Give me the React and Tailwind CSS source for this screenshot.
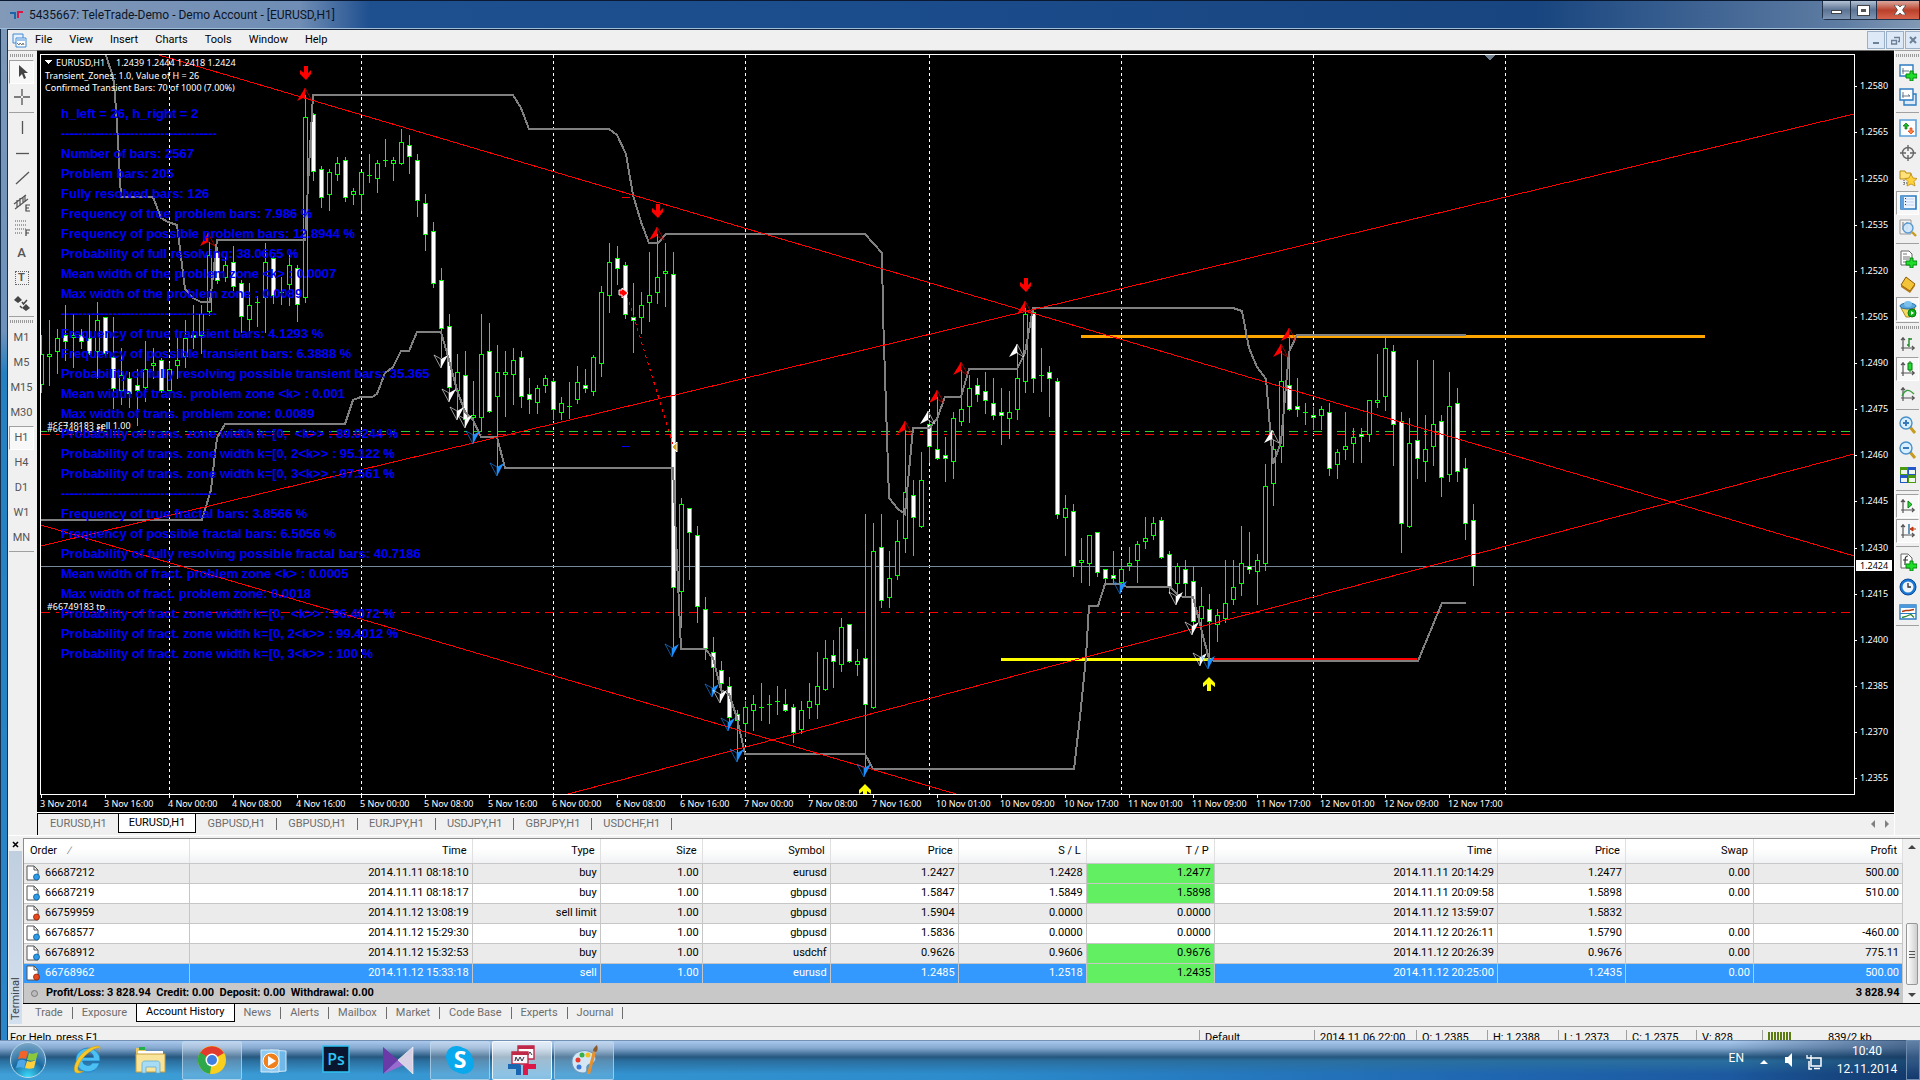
import { useState } from "react";

// one row per hour bar: [high, body top, body bottom, low, type]
// u = rising (hollow), d = falling (filled), x = doji
const BARS = [
  [335, 354, 385, 392, "u"], [320, 354, 357, 385, "u"], [329, 338, 352, 373, "u"], [305, 335, 342, 360, "d"],
  [314, 335, 338, 367, "u"], [329, 335, 342, 348, "d"], [314, 338, 354, 354, "d"], [302, 320, 352, 378, "u"],
  [317, 317, 354, 355, "d"], [317, 357, 389, 408, "d"], [348, 375, 391, 404, "u"], [372, 378, 394, 407, "d"],
  [369, 385, 391, 425, "d"], [341, 369, 388, 401, "u"], [348, 363, 366, 378, "u"], [358, 360, 391, 392, "d"],
  [363, 369, 391, 397, "u"], [338, 360, 366, 378, "u"], [320, 338, 357, 367, "u"], [305, 335, 338, 348, "d"],
  [305, 314, 336, 353, "u"], [242, 255, 312, 315, "u"], [247, 252, 281, 283, "d"], [257, 265, 278, 281, "u"],
  [246, 262, 287, 290, "d"], [280, 283, 317, 332, "d"], [283, 305, 320, 332, "u"], [296, 302, 302, 327, "x"],
  [243, 262, 298, 332, "u"], [256, 258, 296, 303, "d"], [277, 292, 292, 305, "x"], [255, 265, 285, 305, "u"],
  [265, 268, 305, 321, "d"], [95, 117, 298, 302, "u"], [113, 114, 172, 180, "d"], [166, 169, 198, 207, "d"],
  [169, 172, 195, 210, "u"], [157, 163, 175, 180, "u"], [157, 160, 198, 201, "d"], [188, 191, 195, 204, "u"],
  [172, 172, 195, 210, "u"], [154, 175, 175, 183, "x"], [160, 163, 179, 192, "u"], [139, 160, 160, 167, "x"],
  [157, 160, 164, 180, "u"], [129, 142, 164, 164, "u"], [135, 145, 157, 173, "d"], [154, 160, 201, 216, "d"],
  [194, 203, 235, 250, "d"], [222, 231, 284, 287, "d"], [268, 280, 329, 357, "d"], [314, 326, 388, 393, "d"],
  [354, 372, 391, 410, "u"], [351, 375, 420, 423, "d"], [381, 415, 418, 437, "u"], [314, 354, 418, 431, "u"],
  [323, 351, 412, 412, "d"], [345, 372, 397, 467, "u"], [351, 372, 375, 416, "u"], [348, 360, 375, 404, "u"],
  [351, 357, 397, 407, "d"], [378, 394, 400, 413, "d"], [385, 388, 403, 413, "u"], [375, 378, 386, 392, "u"],
  [378, 381, 410, 419, "d"], [397, 403, 413, 419, "u"], [382, 406, 406, 419, "x"], [366, 382, 400, 403, "u"],
  [369, 385, 389, 392, "d"], [355, 357, 392, 395, "u"], [286, 292, 364, 376, "u"], [243, 262, 296, 312, "u"],
  [246, 258, 269, 284, "d"], [262, 265, 315, 318, "d"], [283, 317, 321, 352, "d"], [292, 305, 318, 333, "u"],
  [252, 295, 303, 321, "u"], [234, 277, 293, 303, "u"], [243, 271, 274, 306, "u"], [252, 274, 588, 647, "d"],
  [498, 504, 592, 627, "u"], [508, 508, 533, 579, "d"], [526, 535, 607, 622, "d"], [597, 609, 649, 659, "d"],
  [637, 652, 668, 690, "d"], [661, 670, 684, 692, "d"], [677, 686, 718, 722, "d"], [710, 714, 721, 752, "d"],
  [701, 707, 724, 736, "u"], [695, 704, 711, 730, "u"], [683, 707, 707, 721, "x"], [695, 704, 704, 724, "x"],
  [686, 701, 701, 715, "x"], [689, 704, 711, 711, "d"], [704, 707, 733, 742, "d"], [701, 710, 730, 733, "u"],
  [683, 701, 708, 718, "u"], [652, 686, 705, 718, "u"], [640, 658, 690, 690, "u"], [640, 655, 662, 687, "d"],
  [618, 627, 665, 671, "u"], [624, 624, 662, 662, "d"], [649, 661, 665, 675, "u"], [514, 658, 705, 767, "d"],
  [523, 551, 708, 708, "u"], [514, 547, 601, 607, "d"], [551, 578, 598, 607, "u"], [520, 541, 576, 579, "u"],
  [430, 492, 539, 552, "u"], [480, 495, 518, 555, "d"], [452, 480, 527, 527, "u"], [420, 424, 447, 462, "d"],
  [397, 449, 459, 459, "d"], [437, 455, 459, 481, "d"], [412, 418, 462, 478, "u"], [370, 409, 422, 425, "u"],
  [375, 388, 407, 422, "u"], [378, 385, 395, 401, "d"], [372, 391, 401, 413, "d"], [378, 403, 416, 419, "d"],
  [388, 412, 416, 444, "d"], [391, 412, 419, 438, "u"], [352, 378, 410, 419, "u"], [308, 314, 382, 392, "u"],
  [311, 312, 379, 392, "d"], [348, 375, 375, 392, "x"], [366, 372, 379, 416, "d"], [378, 381, 515, 518, "d"],
  [495, 508, 518, 555, "u"], [504, 511, 567, 576, "d"], [538, 560, 563, 582, "u"], [535, 535, 564, 585, "u"],
  [532, 532, 573, 576, "d"], [569, 569, 579, 583, "d"], [551, 575, 579, 583, "d"], [560, 569, 583, 583, "u"],
  [547, 563, 566, 570, "u"], [541, 544, 561, 582, "u"], [517, 538, 542, 548, "u"], [517, 523, 536, 539, "u"],
  [517, 520, 558, 558, "d"], [551, 554, 587, 593, "d"], [563, 566, 584, 594, "u"], [560, 569, 584, 595, "d"],
  [566, 581, 622, 625, "d"], [587, 606, 619, 657, "u"], [594, 609, 622, 660, "d"], [609, 615, 625, 641, "u"],
  [560, 603, 619, 622, "u"], [560, 587, 600, 604, "u"], [526, 563, 584, 595, "u"], [532, 566, 570, 573, "d"],
  [554, 560, 572, 604, "u"], [464, 486, 564, 570, "u"], [440, 449, 484, 505, "u"], [351, 381, 447, 462, "u"],
  [335, 385, 410, 410, "d"], [378, 406, 410, 416, "d"], [403, 412, 412, 425, "x"], [407, 415, 418, 429, "d"],
  [406, 409, 416, 429, "u"], [403, 412, 469, 475, "d"], [449, 452, 465, 478, "u"], [412, 446, 450, 459, "u"],
  [428, 437, 444, 462, "u"], [428, 434, 437, 462, "d"], [400, 400, 435, 441, "u"], [354, 400, 403, 407, "u"],
  [337, 348, 397, 410, "u"], [345, 351, 425, 465, "d"], [412, 421, 524, 552, "d"], [418, 443, 527, 527, "u"],
  [360, 440, 459, 478, "d"], [415, 449, 462, 481, "u"], [360, 424, 447, 465, "u"], [415, 421, 478, 496, "d"],
  [372, 406, 475, 481, "u"], [388, 403, 472, 481, "d"], [458, 468, 524, 539, "d"], [504, 520, 567, 585, "d"],
];

const UPPER =
  "106,55 109,65 112,73 114,83 116,110 118,140 121,197 153,197 161,218 168,222 177,225 185,289 193,298 201,302 210,302 217,240 305,240 313,95 513,95 521,108 529,129 609,129 617,135 626,154 633,195 641,222 649,243 658,243 666,234 865,234 882,253 883,314 889,498 898,509 905,514 913,428 929,428 937,419 945,397 961,397 969,369 1017,369 1025,353 1033,308 1233,308 1242,311 1249,348 1257,367 1266,379 1273,464 1281,442 1289,352 1297,335 1466,335";
const LOWER =
  "41,520 202,520 208,500 211,490 215,453 217,438 225,424 345,424 353,400 361,397 372,397 377,394 385,373 393,367 401,351 409,351 417,332 441,332 449,360 457,390 465,412 473,420 481,437 497,437 505,468 673,468 675,515 681,649 705,649 713,658 721,690 729,694 737,718 745,754 865,754 873,769 1074,769 1080,717 1086,657 1089,606 1098,606 1105,584 1121,584 1127,587 1170,587 1177,594 1183,597 1193,597 1201,628 1209,659 1214,661 1418,661 1442,603 1466,603";

const DAY_LINES = [169, 361, 553, 745, 929, 1121, 1313, 1505];

const UP_MARKS = [
  [305, 88, "red"], [208, 233, "red"], [657, 227, "red"], [905, 421, "red"], [937, 390, "red"], [961, 362, "red"],
  [1025, 301, "red"], [1281, 344, "red"], [1289, 328, "red"], [928, 411, "white"], [1017, 344, "white"], [1272, 430, "white"],
];
const DOWN_MARKS = [
  [441, 368, "white"], [449, 402, "white"], [457, 420, "white"], [465, 428, "white"], [473, 444, "#1e90ff"],
  [497, 476, "#1e90ff"], [672, 657, "#1e90ff"], [712, 697, "#1e90ff"], [720, 703, "white"], [728, 731, "#1e90ff"],
  [737, 762, "#1e90ff"], [864, 777, "#1e90ff"], [1120, 594, "#1e90ff"], [1176, 605, "white"], [1192, 635, "white"],
  [1200, 666, "white"], [1208, 669, "#1e90ff"],
];

const TIMES = [
  "3 Nov 2014", "3 Nov 16:00", "4 Nov 00:00", "4 Nov 08:00", "4 Nov 16:00", "5 Nov 00:00", "5 Nov 08:00", "5 Nov 16:00",
  "6 Nov 00:00", "6 Nov 08:00", "6 Nov 16:00", "7 Nov 00:00", "7 Nov 08:00", "7 Nov 16:00", "10 Nov 01:00", "10 Nov 09:00",
  "10 Nov 17:00", "11 Nov 01:00", "11 Nov 09:00", "11 Nov 17:00", "12 Nov 01:00", "12 Nov 09:00", "12 Nov 17:00",
];
const PRICES = [
  [86, "1.2580"], [132, "1.2565"], [179, "1.2550"], [225, "1.2535"], [271, "1.2520"], [317, "1.2505"], [363, "1.2490"], [409, "1.2475"],
  [455, "1.2460"], [501, "1.2445"], [548, "1.2430"], [594, "1.2415"], [640, "1.2400"], [686, "1.2385"], [732, "1.2370"], [778, "1.2355"],
];

const DASHES = "------------------------------------";
const STATS = [
  "h_left = 26, h_right = 2",
  DASHES,
  "Number of bars: 2567",
  "Problem bars: 205",
  "Fully resolved bars: 126",
  "Frequency of true problem bars: 7.986 %",
  "Frequency of possible problem bars: 12.8944 %",
  "Probability of full resolving: 38.0665 %",
  "Mean width of the problem zone <k> : 0.0007",
  "Max width of the problem zone : 0.0089",
  DASHES,
  "Frequency of true transient bars: 4.1293 %",
  "Frequency of possible transient bars: 6.3888 %",
  "Probability of fully resolving possible transient bars: 35.365",
  "Mean width of trans. problem zone <k> : 0.001",
  "Max width of trans. problem zone: 0.0089",
  "Probability of trans. zone width k=[0,  <k>> : 89.0244 %",
  "Probability of trans. zone width k=[0, 2<k>> : 95.122 %",
  "Probability of trans. zone width k=[0, 3<k>> : 97.561 %",
  DASHES,
  "Frequency of true fractal bars: 3.8566 %",
  "Frequency of possible fractal bars: 6.5056 %",
  "Probability of fully resolving possible fractal bars: 40.7186",
  "Mean width of fract. problem zone <k> : 0.0005",
  "Max width of fract. problem zone: 0.0018",
  "Probability of fract. zone width k=[0,  <k>> : 96.4072 %",
  "Probability of fract. zone width k=[0, 2<k>> : 99.4012 %",
  "Probability of fract. zone width k=[0, 3<k>> : 100 %",
];

function Candle({ x, bar }) {
  const [high, top, bottom, low, type] = bar;
  if (type === "x") {
    return <path d={`M${x} ${high}h1V${low}h-1zM${x - 2} ${top}h5v1h-5z`} fill="#0f0" />;
  }
  return (
    <g>
      <rect x={x} y={high} width="1" height={low - high + 1} fill="#0f0" />
      <rect x={x - 2} y={top} width="5" height={Math.max(bottom - top, 3)} fill="#0f0" />
      <rect x={x - 1} y={top + 1} width="3" height={Math.max(bottom - top - 2, 1)} fill={type === "d" ? "#fff" : "#000"} />
    </g>
  );
}

function Chart() {
  return (
    <svg
      viewBox="37 51 1857 761"
      preserveAspectRatio="xMinYMin meet"
      className="block w-full h-full bg-black font-['Noto_Sans',sans-serif] text-[9px]"
      role="img"
      aria-label="EURUSD,H1"
    >
      <defs>
        <clipPath id="plot">
          <rect x="41" y="55" width="1813" height="739" />
        </clipPath>
      </defs>
      <g clipPath="url(#plot)" shapeRendering="crispEdges">
        {DAY_LINES.map((x) => (
          <line key={x} x1={x + 0.5} x2={x + 0.5} y1="55" y2="794" stroke="#fff" strokeDasharray="3 3" />
        ))}
        <path d="M1484 55h11l-5 5z" fill="#708090" />
        <line x1="41" x2="1854" y1="566.5" y2="566.5" stroke="#778899" />
        <g strokeDasharray="9 6 3 6">
          <line x1="41" x2="1854" y1="431.5" y2="431.5" stroke="#32cd32" />
          <line x1="41" x2="1854" y1="434.5" y2="434.5" stroke="#f00" />
          <line x1="41" x2="1854" y1="612.5" y2="612.5" stroke="#f00" />
        </g>
        {BARS.map((bar, i) => (
          <Candle key={i} x={41 + i * 8} bar={bar} />
        ))}
        <path d="M1081 335h624v3h-624z" fill="#ffa500" />
        <path d="M1001 658h211v3h-211z" fill="#ff0" />
        <path d="M1212 658h205v3h-205z" fill="#f00" />
        <g fill="none" stroke="#808080" strokeWidth="2">
          <polyline points={UPPER} />
          <polyline points={LOWER} />
        </g>
        <g stroke="#f00" fill="none">
          <path d="M159 55L1854 556M41 546L1854 114M41 525L956 794M568 794L1854 454" />
          <path d="M627 295L673 444" strokeDasharray="3 4" />
          <path d="M622 197.5h8" />
          <path d="M622 446.5h8" stroke="#00f" />
        </g>
      </g>

      {UP_MARKS.map(([x, y, color]) => (
        <g key={`${x}-${y}`} fill={color} stroke={color}>
          <path d={`M${x} ${y}l-8 13 8 -4z`} stroke="none" />
          <path d={`M${x} ${y}l7 13 -7 -4z`} fill="none" strokeWidth="0.6" />
        </g>
      ))}
      {DOWN_MARKS.map(([x, y, color]) => (
        <g key={`${x}-${y}`} fill={color} stroke={color}>
          <path d={`M${x} ${y}l7 -13 -7 4z`} stroke="none" />
          <path d={`M${x} ${y}l-7 -13 7 4z`} fill="none" strokeWidth="0.6" />
        </g>
      ))}
      {[[305, 66], [657, 204], [1025, 278]].map(([x, y]) => (
        <path key={x} d={`M${x - 1} ${y}h4v7l3 -3v4l-5 6 -6 -6v-4l4 3z`} fill="#f00" />
      ))}
      <g clipPath="url(#plot)" fill="#ff0">
        {[[865, 784], [1209, 677]].map(([x, y]) => (
          <path key={x} d={`M${x} ${y}l6 6v4l-4 -3v7h-4v-7l-4 3v-4z`} />
        ))}
      </g>
      <path d="M619 290h3v-2l6 5-6 5v-3h-3z" fill="#f00" stroke="#fff" />
      <path d="M677 442v10l-5-5z" fill="#daa520" stroke="#fff" />

      <g shapeRendering="crispEdges">
        <path d="M40.5 54.5H1854.5V794.5H40.5z" fill="none" stroke="#fff" />
        {TIMES.map((t, i) => (
          <rect key={t} x={41 + i * 64} y="795" width="1" height="3" fill="#fff" />
        ))}
        {PRICES.map(([y]) => (
          <rect key={y} x="1855" y={y} width="2" height="1" fill="#fff" />
        ))}
        <path d="M44 60h8l-4 4z" fill="#fff" />
      </g>

      <g fill="#fff">
        <text x="56" y="66">EURUSD,H1</text>
        <text x="116" y="66">1.2439 1.2444 1.2418 1.2424</text>
        <text x="45" y="79">Transient_Zones: 1.0, Value of H = 26</text>
        <text x="45" y="91">Confirmed Transient Bars: 70 of 1000 (7.00%)</text>
        <text x="47" y="429">#66749183 sell 1.00</text>
        <rect x="47" y="425" width="50" height="7" fill="#000" />
        <text x="47" y="432">#66749183 sl</text>
        <text x="47" y="610">#66749183 tp</text>
        {TIMES.map((t, i) => (
          <text key={t} x={40 + i * 64} y="807">{t}</text>
        ))}
        {PRICES.map(([y, p]) => (
          <text key={p} x="1860" y={y + 3}>{p}</text>
        ))}
        <rect x="1856" y="560" width="36" height="11" />
        <text x="1860" y="569" fill="#000">1.2424</text>
      </g>

      <g fill="#00f" className="font-['Liberation_Sans',sans-serif] text-[13px] font-bold">
        {STATS.map((line, i) => (
          <text key={i} x="61" y={118 + i * 20} className="whitespace-pre">{line}</text>
        ))}
      </g>
    </svg>
  );
}

function Icon({ children, size = 18 }) {
  return (
    <svg viewBox="0 0 18 18" width={size} height={size} fill="none" className="shrink-0" aria-hidden="true">
      {children}
    </svg>
  );
}

const plus = <path d="M10 7h3v3h4v4h-4v3h-3v-3H6v-4h4z" transform="translate(1 1)" fill="#1fdc2a" stroke="#078a10" />;
const axes = <path d="M4 2v14M2 13h14M2 5l2-2 2 2M13 11l2 2-2 2" stroke="#555" strokeWidth="1.2" />;

const RIGHT_GROUPS = [
  [
    ["New Chart", <><path d="M1 2h13v11H1z" fill="#fff" stroke="#2c7cc0" strokeWidth="1.4" /><path d="M4 5v6M3 8h7" stroke="#678" />{plus}</>],
    ["Profiles", <><path d="M5 6h12v11H5z" fill="#dceafa" stroke="#2c7cc0" strokeWidth="1.4" /><path d="M1 1h13v11H1z" fill="#fff" stroke="#2c7cc0" strokeWidth="1.4" /><path d="M4 4v6M3 8h8l-2-1.500" stroke="#678" /></>],
    null,
    ["Market Watch", <><path d="M1 1h16v16H1z" fill="#fff" stroke="#5aa2dc" strokeWidth="1.6" /><path d="M7 4l3 3H8v3H6V7H4z" fill="#1fb82a" stroke="#087a10" strokeWidth=".7" /><path d="M12 15l-3-3h2V9h2v3h2z" fill="#ff8a4a" stroke="#d83a08" strokeWidth=".7" /></>],
    ["Data Window", <path d="M9 1v6M9 11v6M1 9h6M11 9h6M14.500 9A5.500 5.500 0 1 1 9 3.500 5.500 5.500 0 0 1 14.500 9z" stroke="#666" strokeWidth="1.4" />],
    ["Navigator", <><path d="M1 2h5l1 2h5v6H1z" fill="#ffe27a" stroke="#b98a10" /><path d="M5 11v6M5 14h3" stroke="#444" strokeDasharray="1 1" /><path d="M12 5l2 4 4 .5-3 3 1 4.500-4-2-4 2 1-4.500-3-3 4-.5z" fill="#ffd23c" stroke="#b98a10" strokeWidth=".8" /></>],
    ["Terminal", <><path d="M2 2h15v13H2z" fill="#eef5ff" stroke="#2c7cc0" strokeWidth="1.6" /><path d="M2 2h3v13H2z" fill="#5ea1e0" /><path d="M6 5h9M6 8h9M6 11h9" stroke="#bcd0f0" /><path d="M6.500 4v8" stroke="#c00" strokeDasharray="1 2" /></>, true],
    ["Strategy Tester", <><path d="M1 1h11v14H1z" fill="#f3f3f3" stroke="#999" /><path d="M4 3v8M8 3v8" stroke="#777" /><circle cx="9" cy="9" r="5" fill="#cfe6fb" fillOpacity=".9" stroke="#5b9bd0" strokeWidth="1.4" /><path d="M13 13l4 4" stroke="#c79a20" strokeWidth="2.400" /></>],
    null,
    ["New Order", <><path d="M2 1h8l3 3v11H2z" fill="#fff" stroke="#666" /><path d="M4 4h4M4 7h7M4 9h6M4 12h4" stroke="#777" />{plus}</>],
    ["MetaEditor", <><path d="M7 2l9 7-5 7-9-6z" fill="#f3c43a" stroke="#8a5a08" /><path d="M2 10l9 6 5-7v2l-5 7-9-6z" fill="#b57a14" /></>],
    ["Expert Advisors", <><path d="M2 8h14l-5 9H7z" fill="#f6d860" stroke="#b08a1a" /><ellipse cx="9" cy="6" rx="8" ry="3" fill="#57a6dc" stroke="#2a70a8" /><ellipse cx="9" cy="4" rx="4" ry="3" fill="#7cc0ec" /><circle cx="13" cy="13" r="4" fill="#12b01c" stroke="#067a0c" /><path d="M12 11v4l3-2z" fill="#fff" /></>, true],
  ],
  [
    ["Bar Chart", <>{axes}<path d="M10 3v9M10 4h3M8 10h2" stroke="#1a8a20" strokeWidth="1.4" /></>],
    ["Candlesticks", <>{axes}<path d="M11 1v11" stroke="#087a10" /><path d="M9 3h4v7H9z" fill="#25d833" stroke="#087a10" /></>, true],
    ["Line Chart", <>{axes}<path d="M3 11c3-6 6-8 12-2" stroke="#3a9a40" strokeWidth="1.400" /></>],
    null,
    ["Zoom In", <><path d="M11 11l5 6" stroke="#c79a20" strokeWidth="3" /><circle cx="7" cy="7" r="6" fill="#d8efff" stroke="#4a90c8" strokeWidth="1.400" /><path d="M7 4v6M4 7h6" stroke="#3a7ab8" strokeWidth="2" /></>],
    ["Zoom Out", <><path d="M11 11l5 6" stroke="#c79a20" strokeWidth="3" /><circle cx="7" cy="7" r="6" fill="#d8efff" stroke="#4a90c8" strokeWidth="1.400" /><path d="M4 7h6" stroke="#3a7ab8" strokeWidth="2" /></>],
    ["Tile Windows", <><path d="M1 1h8v8H1zM9 9h8v8H9z" fill="#4c9a10" /><path d="M9 1h8v8H9zM1 9h8v8H1z" fill="#2458c8" /><path d="M2 4h6v4H2zM10 4h6v4h-6zM2 12h6v4H2zM10 12h6v4h-6z" fill="#eef6ee" /></>],
    null,
    ["Auto Scroll", <>{axes}<path d="M9 4v7l4-3.500z" fill="#2ad838" stroke="#087a10" /></>, true],
    ["Chart Shift", <>{axes}<path d="M10 2v10" stroke="#2a6aa0" strokeWidth="1.400" /><path d="M11 7l3-2v4zM13 7h4" fill="#c03a10" stroke="#c03a10" /></>, true],
    null,
    ["Indicators", <><path d="M2 1h7l4 4v10H2z" fill="#fff" stroke="#666" /><path d="M9 3c-3 0-3 2-3 9M4 7h5" stroke="#333" strokeWidth="1.200" />{plus}</>],
    ["Periods", <><circle cx="9" cy="9" r="8" fill="#1a78d8" stroke="#0b4a94" /><circle cx="9" cy="9" r="5.500" fill="#eef4fb" /><path d="M9 5v4h3" stroke="#333" strokeWidth="1.300" /></>],
    ["Templates", <><path d="M1 2h16v14H1z" fill="#fff" stroke="#2c7cc0" strokeWidth="1.400" /><path d="M1 2h16v3H1z" fill="#4c98dc" /><path d="M1 10.500h16" stroke="#2c7cc0" /><path d="M3 8.500l4-1 3 0 5-1" stroke="#b03a10" strokeWidth="1.300" /><path d="M3 14.500l4-1 2-1 3-1 3 3" stroke="#2a8a30" strokeWidth="1.300" /></>],
  ],
];

const LEFT_GROUPS = [
  [
    ["Cursor", <path d="M6 2v12l3-3 2 5 2-1-2-5h4z" fill="#444" />, true],
    ["Crosshair", <path d="M9 1v7M9 10v7M1 9h7M10 9h7" stroke="#555" strokeWidth="1.300" />],
    null,
    ["Vertical Line", <path d="M9.500 2v13" stroke="#555" strokeWidth="1.300" />],
    ["Horizontal Line", <path d="M3 9.500h13" stroke="#555" strokeWidth="1.300" />],
    ["Trendline", <path d="M3 15L16 3" stroke="#555" strokeWidth="1.300" />],
    ["Equidistant Channel", <><path d="M1 10L13 1M2 15L15 5M4 6v8M7 4v8M10 3v6M12 1v7" stroke="#555" strokeWidth="1.200" /><path d="M17 11h-4v6h4M13 14h3" stroke="#444" strokeWidth="1.200" /></>],
    ["Fibonacci Retracement", <><path d="M2 2h12M2 6h12M2 10h12M2 14h8" stroke="#555" strokeDasharray="1 1" /><path d="M17 11h-4v6M13 14h3" stroke="#444" strokeWidth="1.200" /></>],
    ["Text", "A"],
    ["Text Label", "T"],
    ["Arrows", <><path d="M5 2l4 4-4 3-4-3zM13 10l4 4-4 3-4-3z" fill="#444" /><path d="M7 12l2 2M9 8l1.500 2L14 6" stroke="#444" strokeWidth="1.500" /></>],
  ],
  [
    ["M1", "M1"], ["M5", "M5"], ["M15", "M15"], ["M30", "M30"], ["H1", "H1", true], ["H4", "H4"], ["D1", "D1"], ["W1", "W1"], ["MN", "MN"],
  ],
];

function ToolColumn({ groups }) {
  return (
    <div className="flex flex-col w-full px-px">
      {groups.map((group, g) => (
        <div key={g} className="flex flex-col border-b border-[#a0a0a0]">
          <div className="h-[9px] flex items-center justify-center">
            <div className="h-[3px] w-[23px] bg-[repeating-linear-gradient(90deg,#9a9a9a_0_1px,#f0f0f0_1px_2px)]" />
          </div>
          {group.map((tool, i) => {
            if (!tool) {
              return <hr key={i} className="my-[2px] border-t border-b-0 border-[#a0a0a0] h-[2px]" />;
            }
            const [label, art, active] = tool;
            return (
              <button
                key={i}
                type="button"
                aria-label={label}
                aria-pressed={!!active}
                className={
                  active
                    ? "h-6 mb-px w-full flex items-center justify-center overflow-hidden border border-[#a0a0a0] border-b-white border-r-white bg-[#f8f8f8] text-[11px] text-[#555]"
                    : "h-6 mb-px w-full flex items-center justify-center overflow-hidden text-[11px] text-[#555]"
                }
              >
                {label === "Text Label" ? (
                  <span className="border border-dotted border-[#666] w-[14px] h-[14px] leading-3 font-bold">{art}</span>
                ) : label === "Text" ? (
                  <span className="text-[13px] font-medium">{art}</span>
                ) : typeof art === "string" ? (
                  art
                ) : (
                  <Icon>{art}</Icon>
                )}
              </button>
            );
          })}
        </div>
      ))}
    </div>
  );
}

function TitleBar() {
  return (
    <header className="h-[29px] shrink-0 flex justify-between items-start border-t border-[#0a1830] border-b border-b-[#9fbcd8] bg-[linear-gradient(90deg,#8299b8_0,#6f8db5_300px,#1e4f8f_370px,#1b4c8c_45%,#18457f_80%,#5f7da3_96%,#8299b5)]">
      <div className="flex items-center gap-[6px] pl-[10px] h-[27px]">
        <svg width="13" height="10" viewBox="0 0 13 10" aria-hidden="true">
          <path d="M0 2h6v7H4V4H0z" fill="#1c66a8" />
          <path d="M13 1H7v7h2V3h4z" fill="#d81848" />
        </svg>
        <h1 className="text-[12px] text-[#0b1526]">5435667: TeleTrade-Demo - Demo Account - [EURUSD,H1]</h1>
      </div>
      <div className="flex h-[19px] rounded-bl border border-t-0 border-[#22324a]">
        <button type="button" aria-label="Minimize" className="w-[28px] flex items-center justify-center border-r border-[#22324a] bg-linear-to-b from-[#b4c2d3] via-[#5c7393] to-[#7f96b4]">
          <span className="w-[11px] h-1 mt-1 bg-white border border-[#444]" />
        </button>
        <button type="button" aria-label="Maximize" className="w-[26px] flex items-center justify-center border-r border-[#22324a] bg-linear-to-b from-[#b4c2d3] via-[#5c7393] to-[#7f96b4]">
          <span className="w-[11px] h-[9px] border-3 border-white outline outline-[#444] bg-[#555]" />
        </button>
        <button type="button" aria-label="Close" className="w-[42px] flex items-center justify-center pl-1 bg-linear-to-b from-[#dba79c] via-[#b9402c] to-[#d8634b]">
          <svg width="12" height="10" viewBox="0 0 12 10" aria-hidden="true">
            <path d="M0 0h4l2 2 2-2h4L8.500 5 12 10H8L6 8l-2 2H0l3.500-5z" fill="#fff" stroke="#444" strokeWidth=".8" />
          </svg>
        </button>
      </div>
    </header>
  );
}

function MenuBar() {
  const items = ["File", "View", "Insert", "Charts", "Tools", "Window", "Help"];
  return (
    <nav className="h-[21px] shrink-0 flex items-center border-t border-[#16263c] bg-[#f0f0f0] pl-1">
      <svg width="15" height="15" viewBox="0 0 15 15" fill="none" className="mr-2" aria-hidden="true">
        <path d="M1 1h10v9H1z" fill="#e6f1fd" stroke="#3f8ad4" />
        <path d="M4 5h10v9H4z" fill="#fff" stroke="#3f8ad4" />
        <path d="M5 7h8" stroke="#3f8ad4" />
        <path d="M5 10l2 2 1-2 2 2 1-2 1 2" stroke="#555" strokeWidth=".8" />
      </svg>
      <div className="flex gap-[17px] text-[11px]">
        {items.map((item) => (
          <button key={item} type="button">{item}</button>
        ))}
      </div>
      <div className="ml-auto flex gap-px h-[18px]">
        <button type="button" aria-label="Minimize chart" className="w-[18px] border border-[#9ab0c8] bg-[#dde9f6] flex items-end justify-center pb-1">
          <span className="w-[6px] h-[2px] bg-[#6c8098]" />
        </button>
        <button type="button" aria-label="Restore chart" className="w-[18px] border border-[#9ab0c8] bg-[#dde9f6] flex items-center justify-center">
          <svg width="9" height="9" viewBox="0 0 9 9" fill="none" stroke="#6c8098" aria-hidden="true">
            <path d="M3 1.500h5.500v4H7M.5 4.500h5v3.500h-5z" strokeWidth="1.400" />
          </svg>
        </button>
        <button type="button" aria-label="Close chart" className="w-[15px] border border-r-0 border-[#9ab0c8] bg-[#dde9f6] flex items-center justify-center">
          <svg width="8" height="8" viewBox="0 0 8 8" stroke="#6c8098" strokeWidth="2" aria-hidden="true">
            <path d="M1 1l6 6M7 1L1 7" />
          </svg>
        </button>
      </div>
    </nav>
  );
}

function ChartTabs() {
  const tabs = ["EURUSD,H1", "EURUSD,H1", "GBPUSD,H1", "GBPUSD,H1", "EURJPY,H1", "USDJPY,H1", "GBPJPY,H1", "USDCHF,H1"];
  const [active, setActive] = useState(1);
  return (
    <div className="h-[22px] shrink-0 flex items-start border-t border-l border-black bg-[#f0f0f0] text-[11px] pl-px">
      <div className="flex h-[19px]">
        {tabs.map((tab, i) => (
          <button
            key={i}
            type="button"
            onClick={() => setActive(i)}
            className={
              i === active
                ? "h-[19px] px-[10px] flex items-center bg-white border border-t-0 border-black text-black"
                : "h-[19px] flex items-center text-[#6d6d6d]"
            }
          >
            {i === active ? tab : <span className={i === active - 1 ? "px-[11px] leading-3" : "px-[11px] leading-3 border-r border-[#6d6d6d]"}>{tab}</span>}
          </button>
        ))}
      </div>
      <div className="ml-auto flex gap-[10px] pr-[5px] h-[19px] items-center">
        <button type="button" aria-label="Scroll tabs left" className="border-4 border-l-0 border-transparent border-r-[#808080] size-0" />
        <button type="button" aria-label="Scroll tabs right" className="border-4 border-r-0 border-transparent border-l-[#808080] size-0" />
      </div>
    </div>
  );
}

const HEAD = ["Order", "Time", "Type", "Size", "Symbol", "Price", "S / L", "T / P", "Time", "Price", "Swap", "Profit"];
const ORDERS = [
  ["66687212", "2014.11.11 08:18:10", "buy", "1.00", "eurusd", "1.2427", "1.2428", "1.2477", "2014.11.11 20:14:29", "1.2477", "0.00", "500.00"],
  ["66687219", "2014.11.11 08:18:17", "buy", "1.00", "gbpusd", "1.5847", "1.5849", "1.5898", "2014.11.11 20:09:58", "1.5898", "0.00", "510.00"],
  ["66759959", "2014.11.12 13:08:19", "sell limit", "1.00", "gbpusd", "1.5904", "0.0000", "0.0000", "2014.11.12 13:59:07", "1.5832", "", ""],
  ["66768577", "2014.11.12 15:29:30", "buy", "1.00", "gbpusd", "1.5836", "0.0000", "0.0000", "2014.11.12 20:26:11", "1.5790", "0.00", "-460.00"],
  ["66768912", "2014.11.12 15:32:53", "buy", "1.00", "usdchf", "0.9626", "0.9606", "0.9676", "2014.11.12 20:26:39", "0.9676", "0.00", "775.11"],
  ["66768962", "2014.11.12 15:33:18", "sell", "1.00", "eurusd", "1.2485", "1.2518", "1.2435", "2014.11.12 20:25:00", "1.2435", "0.00", "500.00"],
];

function OrderIcon({ sell }) {
  return (
    <svg width="14" height="16" viewBox="0 0 14 16" className="shrink-0" aria-hidden="true">
      <path d="M1 1h7l4 4v10H1z" fill="#fff" stroke="#555" />
      <path d="M8 1v4h4" fill="none" stroke="#555" />
      <circle cx="10.500" cy="12" r="3" fill={sell ? "#e8481c" : "#2c9be8"} stroke={sell ? "#8c2408" : "#125a94"} strokeWidth=".8" />
    </svg>
  );
}

function Terminal() {
  const tabs = ["Trade", "Exposure", "Account History", "News", "Alerts", "Mailbox", "Market", "Code Base", "Experts", "Journal"];
  const [active, setActive] = useState("Account History");
  return (
    <section className="shrink-0 flex bg-[#f0f0f0]">
      <div className="w-[15px] flex flex-col items-center shrink-0">
        <button type="button" aria-label="Close terminal" className="h-[13px] flex items-center">
          <svg width="7" height="7" viewBox="0 0 7 7" stroke="#000" strokeWidth="1.600" aria-hidden="true">
            <path d="M1 1l5 5M6 1L1 6" />
          </svg>
        </button>
        <div className="flex-1 w-[13px] mb-[2px] bg-linear-to-b from-[#d3e0ee] to-[#c0cfe0] flex items-center justify-start [writing-mode:vertical-rl] rotate-180">
          <span className="text-[11px] leading-3 text-[#444] pt-1">Terminal</span>
        </div>
      </div>
      <div className="flex-1 min-w-0 flex flex-col">
        <div className="flex border-t border-l border-[#8c8c8c]">
          <div className="flex-1 min-w-0">
            <table className="w-full table-fixed border-collapse text-[11px] leading-4">
              <colgroup>
                <col className="w-[165px]" />
                <col className="w-[283px]" />
                <col className="w-[128px]" />
                <col className="w-[102px]" />
                <col className="w-[128px]" />
                <col className="w-[128px]" />
                <col className="w-[128px]" />
                <col className="w-[128px]" />
                <col className="w-[283px]" />
                <col className="w-[128px]" />
                <col className="w-[128px]" />
                <col className="w-[149px]" />
              </colgroup>
              <thead>
                <tr className="h-6 bg-linear-to-b from-white from-40% to-[#f1f2f4]">
                  {HEAD.map((h, i) => (
                    <th
                      key={i}
                      scope="col"
                      className={i === 0 ? "text-left pl-[6px] font-normal border-b border-r border-b-[#c8c8c8] border-r-[#e0e0e0]" : "text-right pr-[5px] font-normal border-b border-r border-b-[#c8c8c8] border-r-[#e0e0e0]"}
                    >
                      {h}
                      {i === 0 && <span className="pl-3 text-[#888]">∕</span>}
                    </th>
                  ))}
                </tr>
              </thead>
              <tbody>
                {ORDERS.map((row, r) => (
                  <tr
                    key={row[0]}
                    className={r === 5 ? "h-5 bg-[#3399ff] text-white" : r % 2 ? "h-5 bg-white" : "h-5 bg-[#ebebeb]"}
                  >
                    {row.map((cell, c) =>
                      c === 0 ? (
                        <td key={c} className="p-0 pl-[2px] border-b border-r border-[#c6c6c6]">
                          <span className="flex items-center gap-[5px]">
                            <OrderIcon sell={row[2].startsWith("sell")} />
                            {cell}
                          </span>
                        </td>
                      ) : (
                        <td
                          key={c}
                          className={
                            c === 7 && cell !== "0.0000"
                              ? "p-0 pr-[3px] text-right text-black bg-[#62f062] border-b border-r border-[#c6c6c6]"
                              : "p-0 pr-[3px] text-right border-b border-r border-[#c6c6c6]"
                          }
                        >
                          {cell}
                        </td>
                      )
                    )}
                  </tr>
                ))}
              </tbody>
              <tfoot>
                <tr className="h-5 bg-[#c8c8c8] font-bold">
                  <td colSpan="11" className="p-0 pl-[7px]">
                    <span className="flex items-center gap-[8px] whitespace-pre">
                      <span className="size-[7px] rounded-full border border-[#777] bg-[#bbb]" />
                      Profit/Loss: 3 828.94  Credit: 0.00  Deposit: 0.00  Withdrawal: 0.00
                    </span>
                  </td>
                  <td className="p-0 pr-[3px] text-right">3 828.94</td>
                </tr>
              </tfoot>
            </table>
          </div>
          <div className="w-[17px] shrink-0 bg-[#f0f0f0] flex flex-col items-center py-[6px]">
            <div className="border-4 border-t-0 border-transparent border-b-[#444]" />
            <div className="mt-[74px] h-[62px] w-3 rounded-xs border border-[#979797] bg-linear-to-r from-white to-[#cfcfcf] flex flex-col gap-[2px] items-center justify-center">
              <span className="w-[6px] h-px bg-[#555]" />
              <span className="w-[6px] h-px bg-[#555]" />
              <span className="w-[6px] h-px bg-[#555]" />
            </div>
            <div className="mt-auto border-4 border-b-0 border-transparent border-t-[#444]" />
          </div>
        </div>
        <div className="h-[23px] flex items-start border-t border-black text-[11px] pl-[3px]">
          {tabs.map((tab, i) => (
            <button
              key={tab}
              type="button"
              onClick={() => setActive(tab)}
              className={
                tab === active
                  ? "h-[18px] px-[9px] bg-white border border-t-0 border-black text-black flex items-center"
                  : "h-[18px] text-[#6d6d6d] flex items-center"
              }
            >
              {tab === active ? tab : <span className={tabs[i + 1] === active ? "px-[9px] leading-3" : "px-[9px] leading-3 border-r border-[#6d6d6d]"}>{tab}</span>}
            </button>
          ))}
        </div>
      </div>
    </section>
  );
}

function StatusBar() {
  const cell = "border-l border-[#a0a0a0] pl-[5px] shrink-0 whitespace-nowrap";
  return (
    <footer className="h-[14px] shrink-0 flex border-t border-[#a0a0a0] bg-[#f0f0f0] overflow-hidden text-[11px] leading-4 pt-[3px]">
      <div className="flex-1 pl-[2px]">For Help, press F1</div>
      <div className={`${cell} w-[115px]`}>Default</div>
      <div className={`${cell} w-[102px]`}>2014.11.06 22:00</div>
      <div className={`${cell} w-[71px]`}>O: 1.2385</div>
      <div className={`${cell} w-[71px]`}>H: 1.2388</div>
      <div className={`${cell} w-[68px]`}>L: 1.2373</div>
      <div className={`${cell} w-[70px]`}>C: 1.2375</div>
      <div className={`${cell} w-[66px]`}>V: 828</div>
      <div className={`${cell} w-[158px] flex`}>
        <div className="mt-[2px] h-3 w-6 bg-[repeating-linear-gradient(90deg,#5b7a10_0_2px,#f0f0f0_2px_3px)]" />
        <span className="ml-9">839/2 kb</span>
      </div>
    </footer>
  );
}

const TASKS = [
  ["Internet Explorer", <><path d="M16 5a12 12 0 1 0 11.500 15h-7a5.500 5.500 0 0 1-10-2H28A12 12 0 0 0 16 5zm-5.500 9.500a5.500 5.500 0 0 1 11 0z" fill="#4cc0f2" stroke="#1a78c0" strokeWidth=".7" /><path d="M27 9c4-8-3-7-11-3C6 12 0 24 3 29c2 2 6 1 9-1-5 1-7 0-6-4C8 16 18 7 25 5c3-1 3 1 2 4z" fill="#f8c828" stroke="#c89010" strokeWidth=".5" /></>],
  ["Windows Explorer", <><path d="M2 5h8l2 3h17v21H2z" fill="#e8c765" /><path d="M4 8h25v3H4z" fill="#fff" /><path d="M5 4h6v3H5z" fill="#22b04a" /><path d="M2 11h29v18H2z" fill="#f8e49a" stroke="#c8a040" /><path d="M8 30v-9c0-2 1-3 3-3h12c2 0 3 1 3 3v9h-4v-6H12v6z" fill="#a8dcf4" stroke="#5ca8cc" strokeWidth=".7" /></>],
  ["Google Chrome", <><circle cx="16" cy="17" r="14" fill="#f8cf1c" /><path d="M16 17L4 10a14 14 0 0 1 24 0z" fill="#e23a2c" /><path d="M16 17l-12-7.500a14 14 0 0 0 10 21.300z" fill="#2ea84a" /><circle cx="16" cy="17" r="6.500" fill="#fff" /><circle cx="16" cy="17" r="5" fill="#3f7fe0" /></>, true],
  ["Media Player", <><path d="M12 7l16 1v20l-16 1z" fill="#6fb8e8" stroke="#cfeaff" /><path d="M3 7h18v22H3z" fill="#8fcaf0" stroke="#d8eefc" /><circle cx="13" cy="18" r="8" fill="#f0801c" stroke="#fff" /><path d="M10 13l8 5-8 5z" fill="#fff" /></>],
  ["Photoshop", <><path d="M3 3h26v26H3z" fill="#0a1630" stroke="#2fc4f4" strokeWidth="1.400" /><text x="16" y="22" fontSize="16" fontWeight="600" textAnchor="middle" fill="#2fc4f4">Ps</text></>],
  ["KMPlayer", <><path d="M1 4l15 13L1 31z" fill="#6a3aa8" /><path d="M1 31l15-14 6 5z" fill="#9a6ad0" /><path d="M31 4L16 17l15 14z" fill="#d8d0e4" stroke="#fff" strokeWidth=".6" /></>],
  ["Skype", <><rect x="2" y="3" width="21" height="21" rx="10" fill="#0aa8ec" /><rect x="9" y="10" width="21" height="21" rx="10" fill="#0aa8ec" /><circle cx="16" cy="17" r="12.500" fill="#0aa8ec" /><text x="16" y="25" fontSize="23" fontWeight="bold" textAnchor="middle" fill="#fff">S</text></>, true],
  ["MetaTrader", <><path d="M12 3h16v13H12z" fill="#fff" stroke="#c02848" strokeWidth="1.400" /><path d="M12 3h16v3H12z" fill="#c02848" /><path d="M22 12l2-3 2 3" stroke="#334" fill="none" /><path d="M6 9h16v12H6z" fill="#f8f4f8" stroke="#c02848" strokeWidth="1.400" /><path d="M6 9h16v3H6z" fill="#c02848" /><path d="M9 18l1-4 2 4 2-4 2 4 2-4" stroke="#334" fill="none" /><path d="M2 21h11q2 0 2 2v9h-5v-6H2z" fill="#1a66b0" /><path d="M30 21H19q-2 0-2 2v9h5v-6h8z" fill="#dc1848" /></>, true, true],
  ["Paint", <><path d="M4 20C3 11 12 6 20 8c7 2 9 8 6 11-2 3-6 1-7 4s1 7-4 7C9 30 5 26 4 20z" fill="#d4e6f4" stroke="#6a98bc" /><circle cx="10" cy="17" r="2.500" fill="#e83a2c" /><circle cx="14" cy="12" r="2.500" fill="#38b048" /><circle cx="20" cy="12" r="2.500" fill="#f4c020" /><circle cx="11" cy="24" r="2.500" fill="#3a78dc" /><path d="M19 31l6-23 3 1-6 22z" fill="#e8902c" /><path d="M25 8c0-3 2-4 4-6 1 3 1 6-1 7z" fill="#8a5a2c" /></>, true],
];

function Taskbar() {
  return (
    <footer className="h-10 shrink-0 flex items-center text-white bg-[linear-gradient(180deg,#3c5a7c_0,#a9c8ec_1px,#86a9d0_8px,#25577f_17px,#2a6f9f_21px,transparent_34px),linear-gradient(90deg,#3f9fd6,#2c8ccc_50%,#1f66b0_78%,#1a4f92)]">
      <div className="flex items-center gap-0.5 h-full">
        <button type="button" aria-label="Start" className="w-[56px] flex justify-center">
          <svg width="38" height="38" viewBox="0 0 38 38" aria-hidden="true">
            <defs>
              <radialGradient id="orb" cx=".5" cy="1" r="1">
                <stop offset="0" stopColor="#3ee0ff" />
                <stop offset=".5" stopColor="#1a6aa0" />
                <stop offset="1" stopColor="#7fa8c8" />
              </radialGradient>
            </defs>
            <circle cx="19" cy="19" r="17.500" fill="url(#orb)" stroke="#b8d8ee" />
            <path d="M11 11c3-2 6-1 8 0l-2 7c-3-1-5-1-8 0z" fill="#f0642c" />
            <path d="M20 12c3 1 5 1 9-1l-2 8c-3 1-6 1-9 0z" fill="#8cc83c" />
            <path d="M9 20c3-2 6-1 8 0l-2 7c-3-1-5-1-8 0z" fill="#4ca8e8" />
            <path d="M18 20c3 1 5 1 9-1l-2 8c-3 1-6 1-9 0z" fill="#fcd03c" />
          </svg>
        </button>
        {TASKS.map(([name, art, open, focused]) => (
          <button
            key={name}
            type="button"
            aria-label={name}
            className={
              focused
                ? "w-[60px] h-[39px] flex items-center justify-center rounded-xs border border-white/80 bg-linear-to-b from-white/70 to-white/40"
                : open
                  ? "w-[60px] h-[39px] flex items-center justify-center rounded-xs border border-[#bcd8ee]/70 bg-linear-to-b from-white/30 to-white/15"
                  : "w-[60px] h-[39px] flex items-center justify-center"
            }
          >
            <svg width="32" height="34" viewBox="0 0 32 34" className="font-['Open_Sans',sans-serif]" aria-hidden="true">
              {art}
            </svg>
          </button>
        ))}
      </div>
      <div className="ml-auto h-full flex items-center bg-linear-to-r from-transparent to-[#0e2a50]/60 text-[12px]">
        <span className="mr-4 pb-1">EN</span>
        <button type="button" aria-label="Show hidden icons" className="border-4 border-t-0 border-transparent border-b-white mt-1" />
        <svg width="10" height="14" viewBox="0 0 10 14" className="ml-4" aria-label="Volume">
          <path d="M1 4h3l4-4v14l-4-4H1z" fill="#fff" />
        </svg>
        <svg width="16" height="15" viewBox="0 0 16 15" fill="none" stroke="#fff" className="ml-3 mt-1" aria-label="Network">
          <path d="M5 3h10v8H5zM8 13.500h6M3 6v8h3" strokeWidth="1.500" />
          <path d="M1 0v3h4V0" strokeWidth="1.300" />
        </svg>
        <div className="w-[84px] pl-[6px] text-center leading-[18px]">
          <div>10:40</div>
          <div>12.11.2014</div>
        </div>
        <button type="button" aria-label="Show desktop" className="w-[14px] h-full border border-[#6d8cb0] bg-linear-to-b from-[#6f8fb4]/60 to-[#123a70]/60" />
      </div>
    </footer>
  );
}

export default function App() {
  return (
    <div className="h-screen flex flex-col overflow-hidden bg-[#1f6fae] text-black font-['Roboto',sans-serif]">
      <TitleBar />
      <div className="flex-1 min-h-0 flex">
        <div className="w-2 shrink-0 border-l border-r border-[#14304e] bg-[linear-gradient(180deg,#7d98b8_0,#6d92bc_30%,#2480c0_34%,#2a86c8)]" />
        <div className="flex-1 min-w-0 flex flex-col">
          <MenuBar />
          <div className="flex-1 min-h-0 flex bg-[#f0f0f0]">
            <aside className="w-[29px] shrink-0 border-t border-[#a0a0a0] pr-[2px]">
              <ToolColumn groups={LEFT_GROUPS} />
            </aside>
            <main className="flex-1 min-w-0 flex flex-col">
              <div className="flex-1 min-h-0 border-t border-[#696969] bg-black">
                <Chart />
              </div>
              <div className="h-px bg-white" />
              <ChartTabs />
            </main>
            <aside className="w-[26px] shrink-0 border-t border-l border-[#a0a0a0] border-l-white">
              <ToolColumn groups={RIGHT_GROUPS} />
            </aside>
          </div>
          <div className="h-[3px] shrink-0 border-t border-white bg-[#f0f0f0]" />
          <Terminal />
          <StatusBar />
        </div>
      </div>
      <Taskbar />
    </div>
  );
}
